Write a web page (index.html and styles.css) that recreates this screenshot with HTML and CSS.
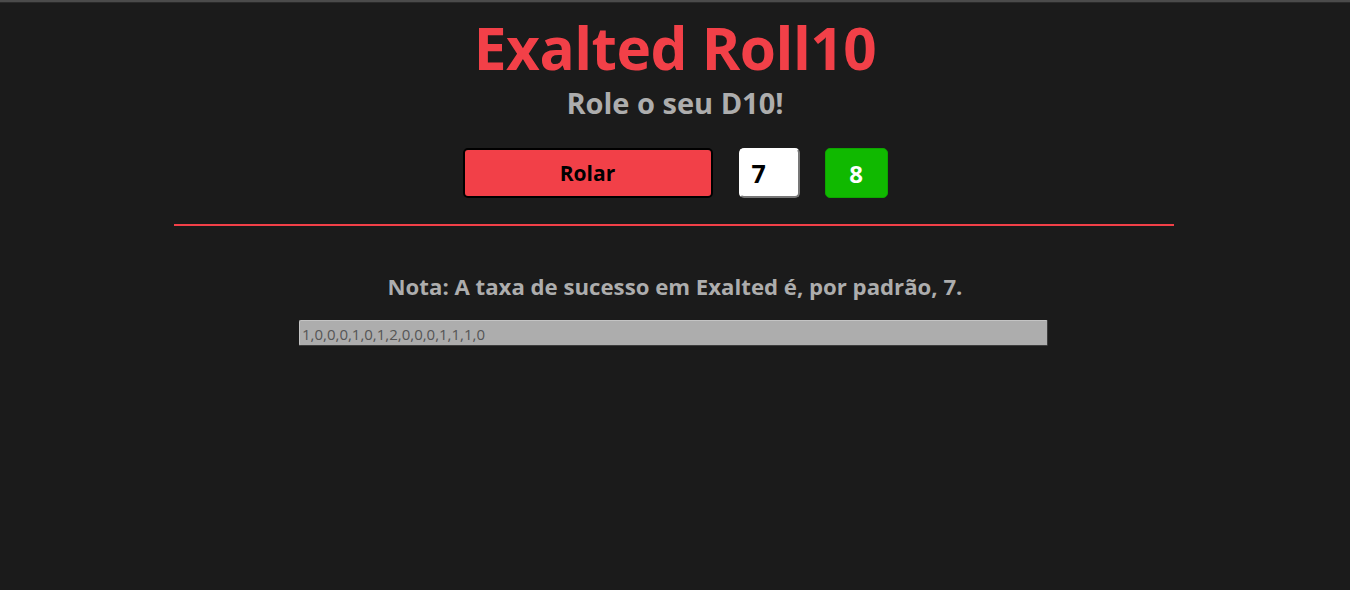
FILE: index.html
```html
<!DOCTYPE html>
<html lang="pt">
<head>
<meta charset="utf-8">
<title>Exalted Roll10</title>
<link rel="stylesheet" href="styles.css">
</head>
<body>
<div class="topbar"></div>
<main class="page">
  <h1 class="title">Exalted Roll10</h1>
  <h2 class="subtitle">Role o seu D10!</h2>
  <div class="controls">
    <button class="roll-btn">Rolar</button>
    <div class="target">7</div>
    <div class="result">8</div>
  </div>
  <hr class="divider">
  <p class="note">Nota: A taxa de sucesso em Exalted é, por padrão, 7.</p>
  <div class="history">1,0,0,0,1,0,1,2,0,0,0,1,1,1,0</div>
</main>
</body>
</html>
```

FILE: styles.css
```css
html, body {
  margin: 0;
  padding: 0;
  background: #1b1b1b;
  height: 100%;
}
body {
  font-family: "Open Sans", "Noto Sans", sans-serif;
}
.topbar {
  height: 2px;
  background: #4b4b4b;
  border-bottom: 1px solid #2a2a2a;
}
.page {
  display: flex;
  flex-direction: column;
  align-items: center;
}
.title {
  margin: 6px 0 0;
  font-size: 58.5px;
  line-height: 76px;
  font-weight: 700;
  color: #f24048;
  letter-spacing: -0.5px;
}
.subtitle {
  margin: 0;
  font-size: 29px;
  line-height: 36px;
  font-weight: 700;
  color: #adadad;
}
.controls {
  display: flex;
  align-items: center;
  margin-top: 27px;
}
.roll-btn {
  width: 250px;
  height: 50px;
  background: #f24048;
  border: 2px solid #000;
  border-radius: 5px;
  font-family: inherit;
  font-size: 21px;
  font-weight: 700;
  color: #000;
  padding: 0;
}
.target {
  height: 46px;
  margin-left: 26px;
  background: #fff;
  border: 2px solid;
  border-color: #fff #777 #777 #fff;
  border-radius: 5px;
  font-size: 25px;
  font-weight: 700;
  color: #000;
  line-height: 46px;
  padding-left: 11px;
  box-sizing: content-box;
  width: 46px;
}
.result {
  width: 61px;
  height: 48px;
  margin-left: 25px;
  background: #10b900;
  border: 1px solid #0ea400;
  border-radius: 5px;
  font-size: 24px;
  font-weight: 700;
  color: #fff;
  display: flex;
  align-items: center;
  justify-content: center;
}
.divider {
  width: 1000px;
  height: 2px;
  margin: 26px 2px 0 0;
  border: 0;
  background: #f24048;
}
.note {
  margin: 47px 0 0;
  font-size: 22.2px;
  line-height: 28px;
  font-weight: 700;
  color: #adadad;
}
.history {
  width: 745px;
  height: 24px;
  margin-top: 19px;
  margin-right: 3px;
  background: #adadad;
  border: 1px solid;
  border-color: #c4c4c4 #3c3c3c #3c3c3c #c4c4c4;
  border-radius: 2px;
  font-size: 15px;
  line-height: 26px;
  color: #555;
  padding-left: 2px;
}
```
